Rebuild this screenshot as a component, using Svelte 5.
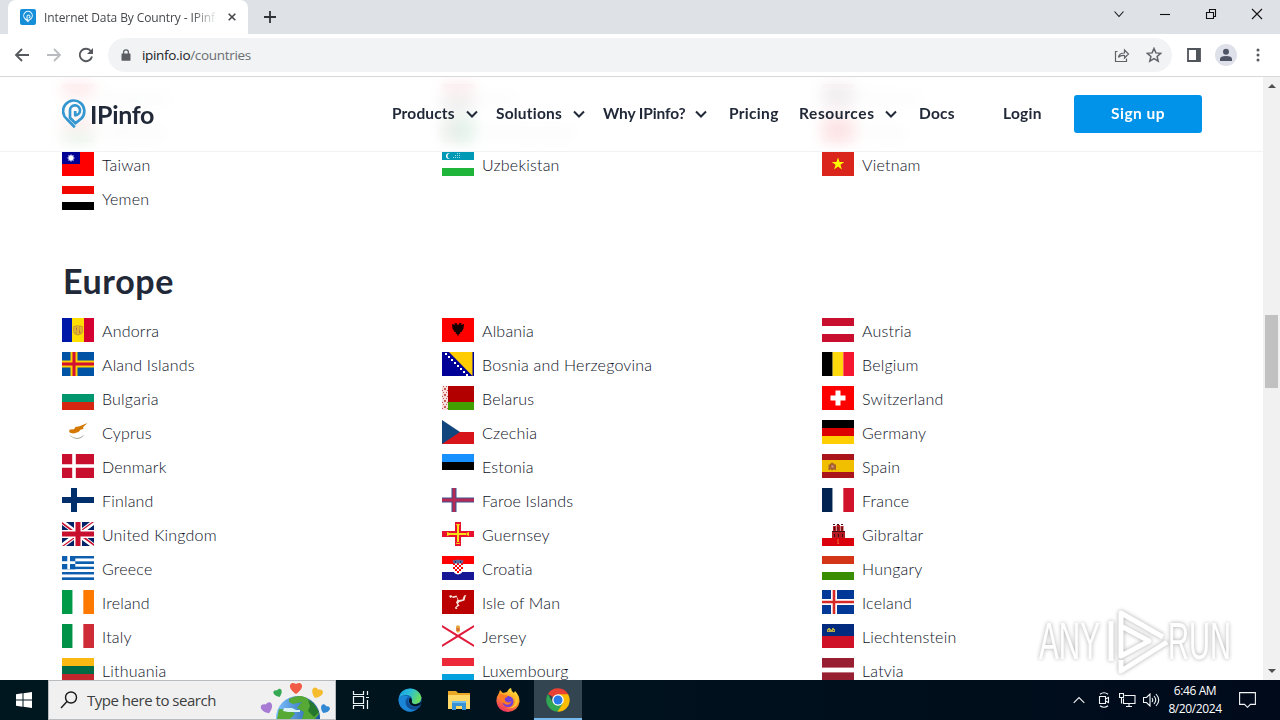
<script lang="ts">
  type Shape = [string, string];
  type Country = { name: string; flag: Shape[] };

  const rect = (x: number, y: number, w: number, h: number) => `M${x} ${y}h${w}v${h}h${-w}z`;

  // equal horizontal and vertical bands
  const rows = (...colors: string[]): Shape[] =>
    colors.map((c, i) => [c, rect(0, (24 / colors.length) * i, 32, 24 / colors.length)]);
  const cols = (...colors: string[]): Shape[] =>
    colors.map((c, i) => [c, rect((32 / colors.length) * i, 0, 32 / colors.length, 24)]);

  const cross = (color: string, cx: number, t: number): Shape => [
    color,
    rect(cx - t / 2, 0, t, 24) + rect(0, 12 - t / 2, 32, t)
  ];

  const dots = (...points: number[][]) => points.map(([x, y, s = 1]) => rect(x, y, s, s)).join('');

  const asia: Country[] = [
    { name: 'Singapore', flag: rows('#ee2536', '#fff') },
    { name: 'Syria', flag: rows('#ce1126', '#fff', '#000') },
    { name: 'Thailand', flag: rows('#a51931', '#f4f5f8', '#2d2a4a', '#2d2a4a', '#f4f5f8', '#a51931') },
    { name: 'Tajikistan', flag: rows('#cc0000', '#fff', '#006600') },
    { name: 'Turkmenistan', flag: [['#00843d', rect(0, 0, 32, 24)], ['#d22630', rect(5, 0, 5, 24)]] },
    { name: 'Turkey', flag: [['#e30a17', rect(0, 0, 32, 24)], ['#fff', 'M14 6a6 6 0 1 0 0 12a5 5 0 1 1 0-12']] },
    {
      name: 'Taiwan',
      flag: [
        ['#fe0000', rect(0, 0, 32, 24)],
        ['#000095', rect(0, 0, 18, 12)],
        ['#8d8dd8', 'M9 2l1.200 1.200 1.700-.2-.2 1.700L13 6l-1.300 1.300.2 1.700-1.700-.2L9 10 7.800 8.800 6.100 9l.2-1.700L5 6l1.300-1.300L6.100 3l1.700.2z'],
        ['#fff', 'M9 3.600a2.400 2.400 0 1 0 0 4.800a2.400 2.400 0 1 0 0-4.800']
      ]
    },
    {
      name: 'Uzbekistan',
      flag: [
        ...rows('#0099b5', '#fff', '#1eb53a'),
        ['#fff', 'M8 1.500a2.800 2.800 0 1 0 0 5a2.500 2.500 0 1 1 0-5'],
        ['#9fdbe6', dots([11, 5], [13, 5], [15, 5], [17, 5], [13, 3], [15, 3], [17, 3], [15, 1], [17, 1])]
      ]
    },
    {
      name: 'Vietnam',
      flag: [
        ['#da251d', rect(0, 0, 32, 24)],
        ['#ff0', 'M16 5.500l1.500 4.500h4.800l-3.900 2.800 1.500 4.600-3.900-2.900-3.900 2.900 1.500-4.600-3.900-2.800h4.800z']
      ]
    },
    { name: 'Yemen', flag: rows('#f10600', '#fff', '#000') }
  ];

  const europe: Country[] = [
    {
      name: 'Andorra',
      flag: [
        ['#0018a8', rect(0, 0, 10, 24)], ['#fedf00', rect(10, 0, 12, 24)], ['#d50032', rect(22, 0, 10, 24)],
        ['#d0a02c', 'M11 8.500q5-2.500 10 0v5q-1 3.500-5 4q-4-.5-5-4z'],
        ['#f2cf2c', rect(12.5, 9, 1, 5) + rect(15.5, 8, 1, 8) + rect(18.5, 9, 1, 5)],
        ['#c8703a', rect(14, 10, 1, 2) + rect(17, 12, 1, 3)]
      ]
    },
    {
      name: 'Albania',
      flag: [
        ['#f00', rect(0, 0, 32, 24)],
        ['#160000', 'M16 7.500l-1.500-2.500-2.500.5 1.200 1.500-3.200-1 .5 4.500 2 3.500 1.500 0-.5 1.500 1.500.500 1 2.500 1-2.500 1.500-.5-.5-1.500 1.500 0 2-3.500 .5-4.500-3.200 1 1.200-1.500-2.500-.5z']
      ]
    },
    { name: 'Austria', flag: rows('#c8102e', '#fff', '#c8102e') },
    { name: 'Aland Islands', flag: [['#0053a5', rect(0, 0, 32, 24)], cross('#ffce00', 12, 7), cross('#d21034', 12, 3)] },
    {
      name: 'Bosnia and Herzegovina',
      flag: [
        ['#000099', rect(0, 0, 32, 24)],
        ['#fc0', 'M7 0h23.500v24z'],
        ['#fff', dots([3, 1, 2], [6, 4, 2], [9, 7, 2], [12, 10, 2], [15, 13, 2], [18, 16, 2], [21, 19, 2], [24, 22, 2])]
      ]
    },
    { name: 'Belgium', flag: cols('#000', '#ffd90c', '#f31830') },
    { name: 'Bulgaria', flag: rows('#fff', '#00966e', '#d62612') },
    {
      name: 'Belarus',
      flag: [
        ['#b20000', rect(0, 0, 32, 16)], ['#429f00', rect(0, 16, 32, 8)], ['#f6dfdc', rect(0, 0, 6, 24)],
        ['#c65b55', dots([1, 0], [4, 0], [2, 2, 2], [0, 4], [5, 4], [1, 6], [4, 6], [2, 8, 2], [0, 10], [5, 10], [1, 12], [4, 12], [2, 14, 2], [0, 16], [5, 16], [1, 18], [4, 18], [2, 20, 2], [0, 22], [5, 22])]
      ]
    },
    { name: 'Switzerland', flag: [['#f00', rect(0, 0, 32, 24)], ['#fff', rect(13.5, 4.5, 5, 15) + rect(8.5, 9.5, 15, 5)]] },
    {
      name: 'Cyprus',
      flag: [
        ['#fff', rect(0, 0, 32, 24)],
        ['#d57800', 'M7 11l1-1.500 4-.3 1.500-2.200 4-.8 8-3.200-4.500 4.200.5 1.500-3 1-2 2.300-5 1.500-3.500-.7z'],
        ['#a3ab9f', 'M7 14.800q3 3.500 8 4.200 6-.7 7-4.700-2 3-7 3.700-4-.2-8-3.200']
      ]
    },
    { name: 'Czechia', flag: [...rows('#fff', '#d7141a'), ['#11457e', 'M0 0l18 12L0 24z']] },
    { name: 'Germany', flag: rows('#000', '#d00', '#ffce00') },
    { name: 'Denmark', flag: [['#c8102e', rect(0, 0, 32, 24)], cross('#fff', 12, 3.6)] },
    { name: 'Estonia', flag: rows('#1791ff', '#000', '#fff') },
    {
      name: 'Spain',
      flag: [
        ['#aa151b', rect(0, 0, 32, 24)], ['#f1bf00', rect(0, 6, 32, 12)],
        ['#a7612d', 'M6.500 10.500h1.500v5.500H6.500zm6 0H14v5.500h-1.500zM8 10l2-1.500 2.500 1.500v5l-2.500 1.500L8 15z'],
        ['#d4a190', rect(9.5, 11.5, 2, 2)]
      ]
    },
    { name: 'Finland', flag: [['#fff', rect(0, 0, 32, 24)], cross('#002f6c', 12, 6)] },
    { name: 'Faroe Islands', flag: [['#fff', rect(0, 0, 32, 24)], cross('#3a5590', 12, 5), cross('#b82a54', 12, 2.8)] },
    { name: 'France', flag: cols('#00234f', '#fff', '#d0122b') },
    {
      name: 'United Kingdom',
      flag: [
        ['#012169', rect(0, 0, 32, 24)],
        ['#fff', 'M0 0h4l12 9L28 0h4v3l-12 9 12 9v3h-4l-12-9-12 9H0v-3l12-9L0 3z'],
        ['#c8102e', 'M0 0l11 8h-3L0 2zm32 0l-11 8h-2l11-8zM0 24l11-8h2L2 24zm32 0l-11-8h3l8 6z'],
        ['#fff', rect(12, 0, 8, 24) + rect(0, 8, 32, 8)],
        ['#c8102e', rect(13.5, 0, 5, 24) + rect(0, 9.5, 32, 5)]
      ]
    },
    {
      name: 'Guernsey',
      flag: [
        ['#fff', rect(0, 0, 32, 24)], ['#e8112d', rect(13, 0, 6, 24) + rect(0, 9, 32, 6)],
        ['#f9dd16', rect(15, 3, 2, 18) + rect(7, 11, 18, 2) + 'M5 10l2.500 1v2L5 14zm22 0l-2.500 1v2l2.500 1zM14 2h4l-1 2h-2zm0 20h4l-1-2h-2z']
      ]
    },
    {
      name: 'Gibraltar',
      flag: [
        ['#fff', rect(0, 0, 32, 16)], ['#da000c', rect(0, 16, 32, 8)],
        ['#b51a23', rect(11, 4, 3, 11) + rect(14.5, 3, 3.5, 12) + rect(18.5, 4, 3, 11) + rect(10, 9, 13, 7)],
        ['#401018', rect(11, 2, 2, 1) + rect(15, 2, 2, 1) + rect(19, 2, 2, 1) + rect(12, 5, 1, 3) + rect(15.5, 5, 1, 3) + rect(19.5, 5, 1, 3) + rect(10, 9, 13, 1) + rect(12, 12, 1, 3) + rect(16, 12, 1, 3) + rect(20, 12, 1, 3)],
        ['#e8702a', rect(15.5, 17, 1, 5) + rect(16, 21, 1, 1)]
      ]
    },
    {
      name: 'Greece',
      flag: [
        ...rows('#0d5eaf', '#fff', '#0d5eaf', '#fff', '#0d5eaf', '#fff', '#0d5eaf', '#fff', '#0d5eaf'),
        ['#0d5eaf', rect(0, 0, 13.3, 13.3)],
        ['#fff', rect(5.3, 0, 2.7, 13.3) + rect(0, 5.3, 13.3, 2.7)]
      ]
    },
    {
      name: 'Croatia',
      flag: [
        ...rows('#f00', '#fff', '#171796'),
        ['#fff', 'M11 7h10v7q-1 4-5 4.500-4-.5-5-4.500z'],
        ['#f00', dots([11, 7, 2], [15, 7, 2], [19, 7, 2], [13, 9, 2], [17, 9, 2], [11, 11, 2], [15, 11, 2], [19, 11, 2], [13, 13, 2], [17, 13, 2], [15, 15, 2])],
        ['#5a6ba0', 'M10.500 4l2 .5L14 3.500l2 .5 2-.5 1.500 1 2-.5-1 3.500h-9z'],
        ['#26315e', rect(13, 5, 1, 2) + rect(18, 5, 1, 2)]
      ]
    },
    { name: 'Hungary', flag: rows('#d43516', '#fff', '#388d00') },
    { name: 'Ireland', flag: cols('#009a49', '#fff', '#ff7900') },
    {
      name: 'Isle of Man',
      flag: [
        ['#ba0000', rect(0, 0, 32, 24)],
        ['#f6e5dc', 'M7 6l2-1 1.500 1.500 4-1 2 4.500 4-.5 1.500-4 2.500-.5-1 1.500-1 4-5 1.500-1.500 1.500 1.500 2-3 2 1 1.500-2 0-.5-1.500 2.500-2.500-1.500-2.500 1.500-3-1-2.500-3 1-2-1-.5 1-1-.5z']
      ]
    },
    { name: 'Iceland', flag: [['#003897', rect(0, 0, 32, 24)], cross('#fff', 12, 6), cross('#d72828', 12, 2.6)] },
    { name: 'Italy', flag: cols('#009246', '#fff', '#ce2b37') },
    {
      name: 'Jersey',
      flag: [
        ['#fff', rect(0, 0, 32, 24)],
        ['#e01b3c', 'M0 1l16 9.700L32 1v2.300L18 12l14 8.700V23L16 13.300 0 23v-2.300L14 12 0 3.300z'],
        ['#e8a73a', 'M14 3l.5-1.500h3L18 3v4l-2 2-2-2z'],
        ['#d9703a', rect(14.5, 4, 3, 3)]
      ]
    },
    {
      name: 'Liechtenstein',
      flag: [...rows('#002b7f', '#ce1126'), ['#b9a847', rect(5, 5, 8, 3) + rect(6, 4, 2, 1) + rect(10, 4, 2, 1)], ['#444c35', dots([6, 6], [9, 5], [11, 6])]]
    },
    { name: 'Lithuania', flag: rows('#fdb913', '#006a44', '#c1272d') },
    { name: 'Luxembourg', flag: rows('#ed2939', '#fff', '#00a1de') },
    { name: 'Latvia', flag: [['#981e32', rect(0, 0, 32, 24)], ['#fff', rect(0, 9.6, 32, 4.8)]] }
  ];

  const nav = [
    { label: 'Products', menu: true, spacing: 0.15 },
    { label: 'Solutions', menu: true, spacing: 0.2 },
    { label: 'Why IPinfo?', menu: true, spacing: -0.12, wide: true },
    { label: 'Pricing', spacing: 0.3 },
    { label: 'Resources', menu: true, spacing: 0.6, wide: true },
    { label: 'Docs', spacing: 0.2 },
    { label: 'Login', spacing: 0.3 }
  ];
</script>

{#snippet grid(countries: Country[])}
  <ul class="countries">
    {#each countries as country}
      <li>
        <svg class="flag" viewBox="0 0 32 24">
          {#each country.flag as [fill, d]}
            <path {fill} {d} />
          {/each}
        </svg>
        <span>{country.name}</span>
      </li>
    {/each}
  </ul>
{/snippet}

<div class="desktop">
  <div class="tabstrip">
    <div class="tab">
      <svg class="favicon" viewBox="0 0 16 16">
        <rect width="16" height="16" rx="2" fill="#168fd8" />
        <path d="M8.500 13L4.800 9.500a4.300 4.300 0 1 1 6.400 0L8.500 11.600 7 10V7.500a1.500 1.500 0 1 1 1.500 1.500" fill="none" stroke="#e3f5ff" stroke-width="1.1" />
      </svg>
      <span class="tab-title">Internet Data By Country - IPinfo</span>
      <svg class="tab-close" viewBox="0 0 8 8"><path d="M.7.7l6.600 6.600M7.300.7L.7 7.300" stroke="#45494d" stroke-width="1.6" /></svg>
    </div>
    <svg class="new-tab" viewBox="0 0 12 12"><path d="M6 0v12M0 6h12" stroke="#303238" stroke-width="1.8" /></svg>
    <div class="window-buttons">
      <svg viewBox="0 0 12 12"><path d="M1.500 3.500L6 8.500l4.500-5" /></svg>
      <svg viewBox="0 0 12 12"><path d="M1 6.500h10" /></svg>
      <svg viewBox="0 0 12 12"><path d="M1.500 4.500h7v6h-7zM4.500 4.500v-3h6v7h-2" /></svg>
      <svg viewBox="0 0 12 12"><path d="M1 1l10 10M11 1L1 11" /></svg>
    </div>
  </div>

  <div class="toolbar">
    <svg class="tool" viewBox="0 0 16 16"><path d="M15 8H2M8 2L2 8l6 6" fill="none" stroke="#55595e" stroke-width="1.8" /></svg>
    <svg class="tool" viewBox="0 0 16 16"><path d="M1 8h13M8 2l6 6-6 6" fill="none" stroke="#b9bbbe" stroke-width="1.8" /></svg>
    <svg class="tool" viewBox="0 0 16 16">
      <path d="M13 4.300A6.200 6.200 0 1 0 14 9.500" fill="none" stroke="#55595e" stroke-width="1.9" />
      <path d="M15 1v6H9z" fill="#55595e" />
    </svg>
    <div class="omnibox">
      <svg class="lock" viewBox="0 0 10 12">
        <path d="M1 4.500h8q.5 0 .5.600v6q0 .6-.5.600H1q-.5 0-.5-.6v-6q0-.6.5-.6" fill="#5b5f64" />
        <path d="M2.600 5V3.300a2.400 2.400 0 0 1 4.800 0V5" fill="none" stroke="#5b5f64" stroke-width="1.3" />
      </svg>
      <span class="url"><b>ipinfo.io</b>/countries</span>
      <svg class="share" viewBox="0 0 16 16">
        <path d="M3.500 4.500h-2v10h11v-3M4.500 10.500q.5-4.500 6-4.500V3l4 4-4 4V8.500q-4-.5-6 2" fill="none" stroke="#5f6368" stroke-width="1.2" />
      </svg>
      <svg class="star" viewBox="0 0 16 16">
        <path d="M8 1.500l1.900 4.400 4.800.4-3.600 3.100 1.100 4.700L8 11.600l-4.200 2.500 1.100-4.700-3.600-3.100 4.800-.4z" fill="none" stroke="#5f6368" stroke-width="1.5" />
      </svg>
    </div>
    <svg class="panel" viewBox="0 0 14 14"><path d="M1 1h12v12H1z" fill="#fff" stroke="#50545b" stroke-width="1.8" /><path d="M9 1h4v12H9z" fill="#50545b" /></svg>
    <svg class="avatar" viewBox="0 0 22 22">
      <circle cx="11" cy="11" r="11" fill="#dfe1ea" />
      <circle cx="11" cy="7.7" r="3" fill="#505566" />
      <path d="M5 17v-2q0-3 6-3t6 3v2z" fill="#505566" />
    </svg>
    <svg class="kebab" viewBox="0 0 4 14"><circle cx="2" cy="2" r="1.5" /><circle cx="2" cy="7" r="1.5" /><circle cx="2" cy="12" r="1.5" /></svg>
  </div>

  <div class="viewport">
    <div class="page">
      <main>
        {@render grid(asia)}
        <h2>Europe</h2>
        {@render grid(europe)}
      </main>
      <header>
        <a class="logo" href="/" aria-label="IPinfo">
          <svg viewBox="0 0 24 31">
            <path d="M12.800 29.200L5 21.300A10.600 10.600 0 1 1 19.300 20.500L13.500 25.300 8 19.800V12.500A5 5 0 1 1 13.200 17.300V13" fill="none" stroke="#3597d0" stroke-width="2.7" stroke-linejoin="round" />
          </svg>
          <span>IPinfo</span>
        </a>
        <nav>
          {#each nav as item}
            <a href="/" class:wide={item.wide} style:letter-spacing="{item.spacing}px">
              <span>{item.label}</span>
              {#if item.menu}
                <svg viewBox="0 0 12 8"><path d="M1 1.500l5 5 5-5" fill="none" stroke="#212938" stroke-width="2" /></svg>
              {/if}
            </a>
          {/each}
          <a class="signup" href="/"><span>Sign up</span></a>
        </nav>
      </header>
    </div>
    <div class="scrollbar">
      <svg viewBox="0 0 8 4"><path d="M4 0l4 4H0z" /></svg>
      <div class="thumb"></div>
      <svg viewBox="0 0 8 4"><path d="M0 0h8L4 4z" /></svg>
    </div>

    <svg class="watermark" viewBox="0 0 210 74">
      <g fill="#fff" font-size="52">
        <text x="8" y="55" textLength="61" lengthAdjust="spacingAndGlyphs">ANY</text>
        <text x="137" y="55" textLength="63" lengthAdjust="spacingAndGlyphs">RUN</text>
      </g>
      <path d="M80 57V17M90 46V9l42 24M90 56V67l46-29M90 22v30l28-15z" fill="none" stroke="#fff" stroke-width="5" stroke-linejoin="round" />
    </svg>
  </div>

  <div class="taskbar">
    <div class="start">
      <svg viewBox="0 0 16 16"><path d="M0 2.200l6.500-.9v6.200H0zM7.500 1.200L16 0v7.500H7.500zM0 8.500h6.500v6.200L0 13.800zM7.500 8.500H16V16l-8.500-1.200z" fill="#fff" /></svg>
    </div>
    <div class="search">
      <svg class="glass" viewBox="0 0 18 18"><circle cx="11" cy="6.5" r="5.5" /><path d="M7 10.500L1 17" /></svg>
      <span>Type here to search</span>
      <svg class="earth" viewBox="0 0 72 38">
        <defs>
          <linearGradient id="sea"><stop offset="0" stop-color="#7ec0ff" /><stop offset="1" stop-color="#17569e" /></linearGradient>
          <path id="heart" d="M0 6C-10 0-6-8 0-4 6-8 10 0 0 6" />
        </defs>
        <circle cx="38" cy="37" r="22" fill="url(#sea)" />
        <path d="M29 18q13-7 21 2 7 5 9 13l-4 5H42l2-7-7-4 5-6-9 2-4-2zM19 28l12 1 4 4-5 5H17z" fill="#55a934" />
        <path d="M48 19l5 3 6 9-5 5-6-6 2-5z" fill="#25772d" />
        <path d="M24 27h8l4 2h4v2H28l-5-1z" fill="#d9f3f4" />
        <use href="#heart" transform="translate(36 7)" fill="#f15c46" />
        <use href="#heart" transform="translate(18 12) rotate(-22) scale(.7)" fill="#35a853" />
        <use href="#heart" transform="translate(57 12) rotate(22) scale(.9)" fill="#f5bd2d" />
        <use href="#heart" transform="translate(7 27) rotate(-20) scale(.95)" fill="#a77bd4" />
        <use href="#heart" transform="translate(65 28) rotate(24) scale(.75)" fill="#3289d3" />
      </svg>
    </div>
    <div class="app">
      <svg class="taskview" viewBox="0 0 18 18"><path d="M1.500 0v3.500h10V0M1.500 5.500h10v7h-10zM1.500 18v-3.500h10V18M15.500 0v4M15.500 9v9M14 6.500h3" fill="none" stroke="#eef3f5" stroke-width="1.2" /></svg>
    </div>
    <div class="app">
      <svg viewBox="0 0 24 24">
        <defs>
          <linearGradient id="edge" x2="1" y2=".4"><stop offset="0" stop-color="#1799dc" /><stop offset=".5" stop-color="#29bdd7" /><stop offset="1" stop-color="#69dd62" /></linearGradient>
        </defs>
        <circle cx="12" cy="12" r="11.5" fill="#1267b4" />
        <path d="M.6 11Q2 .5 12.500.5q8.500.5 11 9-.5 6-6.500 6.500-4 0-3-3 1-5-4.500-6Q3 6.500.6 11" fill="url(#edge)" />
        <path d="M.6 11q4-5 10-2.500-5 3-2.500 8.500 3 6 10.500 4.500-6 4-12 .5Q.5 18.500.6 11" fill="#1b86d6" />
        <path d="M11 10q-2.500 4 1.500 7.500 4 2 9 0l1-1q1 1-1 3-4 3-9 1.500-6-3-4-8.500.8-2 2.500-2.500" fill="#124d91" />
        <path d="M12 9.500q2.500 1.500 2 4-.5 3 4 2.700 4-.5 5.300-3-.3 3-2.300 4.300-5 1.500-8-.5-3.500-3.500-1-7.500" fill="#00131e" />
      </svg>
    </div>
    <div class="app">
      <svg class="folder" viewBox="0 0 22 20">
        <path d="M0 1h8l2 2h12v16H0z" fill="#e9a927" />
        <path d="M0 5h22v14H0z" fill="#ffd968" />
        <path d="M4 12h14v8h-4v-4H8v4H4z" fill="#3992d4" />
        <path d="M4 11h14v2H4z" fill="#72bceb" />
      </svg>
    </div>
    <div class="app">
      <svg viewBox="0 0 24 24">
        <defs>
          <linearGradient id="fox" x1=".8" y1="0" x2=".3" y2="1"><stop offset="0" stop-color="#fff33f" /><stop offset=".45" stop-color="#ff9a25" /><stop offset="1" stop-color="#f02c63" /></linearGradient>
        </defs>
        <path d="M3 5l1-3 3 3 4-1q1-3 4-4 0 3 3 5l1-2q5 5 4.500 11Q22 23 12 24 2 23.500.5 14 0 9 3 5" fill="url(#fox)" />
        <circle cx="12" cy="13.5" r="5.5" fill="#7540d7" />
        <path d="M3 6q3 0 5 1l4 .5q-.5 2-3 2.500-1 4 3.500 4.500 2 0 3-2-1 5-5.500 4Q4 15 3 6" fill="#ff7b22" />
        <path d="M15 5q6 3 4 10-2 5-8 5 10 2 11-8-1-6-7-7" fill="#ffc52b" />
      </svg>
    </div>
    <div class="app active">
      <svg viewBox="0 0 24 24">
        <path d="M12 12L1.900 6A11.700 11.700 0 0 1 22.200 6.300z" fill="#e94235" />
        <path d="M12 12h11.700A11.700 11.700 0 0 0 22.100 6.200H12z" fill="#fbbc04" />
        <path d="M12 12h11.700A11.700 11.700 0 0 1 11.500 23.700z" fill="#fbbc04" />
        <path d="M12 12l5 3-5.500 8.700A11.700 11.700 0 0 1 1.900 6L7 15z" fill="#32a753" />
        <circle cx="12" cy="12" r="5.8" fill="#fff" />
        <circle cx="12" cy="12" r="4.5" fill="#287ae8" />
      </svg>
    </div>
    <div class="tray">
      <svg class="up" viewBox="0 0 12 8"><path d="M.7 6.800L6 1.500l5.300 5.300" /></svg>
      <svg class="meet" viewBox="0 0 12 16"><path d="M1.500 4.500h6v7h-6zM7.500 7l3-1.500v5l-3-1.500M2 2.200q4-3 8 0M2 13.800q4 3 8 0" /></svg>
      <svg class="network" viewBox="0 0 17 14"><path d="M5.500 2.500h10.500v8H4.500v-5M7 13.500h6M10 10.500v3M.5.500h4v4h-4zM2.500 4.500v6" /></svg>
      <svg class="sound" viewBox="0 0 17 14"><path d="M.5 4.500h3L7 1v12L3.500 9.500h-3zM9 5q1.500 2 0 4M11 3q3.500 4 0 8M13 1q5.500 6 0 12" /></svg>
      <div class="clock"><span>6:46 AM</span><span>8/20/2024</span></div>
      <svg class="notes" viewBox="0 0 17 16"><path d="M.6.6h15.800v11.800h-5L8.500 15.300l-3-2.900H.6z" /></svg>
    </div>
  </div>
</div>

<style>
  .desktop {
    width: 1280px;
    height: 720px;
    overflow: hidden;
    display: flex;
    flex-direction: column;
    background: #fff;
    font-family: 'Open Sans', 'Noto Sans', sans-serif;
  }

  svg {
    display: block;
    flex: none;
  }

  a {
    color: inherit;
    text-decoration: none;
  }

  /* browser chrome */
  .tabstrip {
    height: 34px;
    flex: none;
    display: flex;
    align-items: center;
    background: #dee1e6;
    padding-left: 8px;
  }

  .tab {
    width: 240px;
    height: 34px;
    box-sizing: border-box;
    display: flex;
    align-items: center;
    padding: 0 12px;
    background: #fff;
    border-radius: 8px 8px 0 0;
  }

  .favicon {
    width: 16px;
    height: 16px;
  }

  .tab-title {
    width: 172px;
    margin-left: 8px;
    overflow: hidden;
    white-space: nowrap;
    font-size: 12px;
    letter-spacing: -0.1px;
    color: #45484c;
    mask-image: linear-gradient(to right, #000 148px, transparent 174px);
  }

  .tab-close {
    width: 8px;
    height: 8px;
    margin-left: 12px;
  }

  .new-tab {
    width: 12px;
    height: 12px;
    margin-left: 16px;
  }

  .window-buttons {
    margin-left: auto;
    display: flex;
    gap: 34px;
    padding: 0 17px 6px 0;
  }

  .window-buttons svg {
    width: 12px;
    height: 12px;
    fill: none;
    stroke: #111;
    stroke-width: 1.1;
  }

  .toolbar {
    height: 42px;
    flex: none;
    display: flex;
    align-items: center;
    padding-left: 14px;
    border-bottom: 1px solid #d6d8da;
  }

  .tool {
    width: 16px;
    height: 16px;
    margin-right: 16px;
  }

  .omnibox {
    width: 1064px;
    height: 34px;
    box-sizing: border-box;
    margin-left: -2px;
    display: flex;
    align-items: center;
    padding: 0 10px 0 13px;
    border-radius: 17px;
    background: #f1f3f4;
  }

  .lock {
    width: 10px;
    height: 12px;
  }

  .url {
    margin-left: 11px;
    font-size: 13.5px;
    letter-spacing: -0.32px;
    color: #6a6e73;
  }

  .url b {
    font-weight: 400;
    color: #202124;
  }

  .share {
    width: 16px;
    height: 16px;
    margin-left: auto;
  }

  .star {
    width: 16px;
    height: 16px;
    margin-left: 16px;
  }

  .panel {
    width: 14px;
    height: 14px;
    margin-left: 15px;
  }

  .avatar {
    width: 22px;
    height: 22px;
    margin-left: 14px;
  }

  .kebab {
    width: 4px;
    height: 14px;
    margin-left: 19px;
    fill: #55595e;
  }

  /* web page */
  .viewport {
    height: 603px;
    flex: none;
    display: flex;
    position: relative;
  }

  .page {
    width: 1263px;
    height: 603px;
    overflow: hidden;
    position: relative;
    font-family: Lato, 'Open Sans', sans-serif;
    color: #212938;
  }

  main {
    padding: 7px 61px 0 62px;
  }

  .countries {
    display: grid;
    grid-template-columns: repeat(3, 380px);
    grid-auto-rows: 34px;
    margin: 0;
    padding: 0;
    list-style: none;
  }

  .countries li {
    height: 24px;
    display: flex;
    gap: 8px;
  }

  .countries span {
    padding-top: 1px;
    font-size: 16px;
    line-height: 24px;
    font-weight: 300;
    letter-spacing: 0.2px;
    color: #0c1226;
    white-space: nowrap;
  }

  .flag {
    width: 32px;
    height: 24px;
  }

  h2 {
    margin: 0;
    padding: 37px 0 1px 1px;
    height: 60px;
    font-size: 34px;
    line-height: 48px;
    font-weight: 700;
    letter-spacing: 0.6px;
  }

  header {
    position: absolute;
    top: 0;
    left: 0;
    width: 1263px;
    height: 75px;
    box-sizing: border-box;
    padding: 0 61px 0 62px;
    display: flex;
    align-items: center;
    justify-content: space-between;
    background: rgba(255, 255, 255, 0.88);
    backdrop-filter: blur(8px);
    border-bottom: 1px solid #f1f2f4;
  }

  .logo {
    display: flex;
    align-items: center;
    gap: 4px;
    padding-bottom: 1px;
    font-size: 25px;
    font-weight: 700;
    letter-spacing: -0.35px;
  }

  .logo svg {
    width: 24px;
    height: 31px;
  }

  nav {
    display: grid;
    grid-template-columns: 104px 107px 126px 70px 120px 84px 71px 128px;
    align-items: center;
    font-size: 15.5px;
    font-weight: 700;
    white-space: nowrap;
  }

  nav a {
    display: flex;
    align-items: center;
    justify-content: space-between;
    padding-right: 18px;
  }

  nav .wide {
    padding-right: 22px;
  }

  nav span {
    padding-bottom: 2px;
  }

  nav svg {
    width: 12px;
    height: 8px;
  }

  nav .signup {
    height: 38px;
    padding: 0;
    justify-content: center;
    border-radius: 3px;
    background: #0093e9;
    color: #fff;
    letter-spacing: 0.45px;
  }

  .scrollbar {
    width: 17px;
    box-sizing: border-box;
    display: flex;
    flex-direction: column;
    align-items: center;
    padding: 7px 1px;
    background: #f1f1f1;
  }

  .scrollbar svg {
    width: 8px;
    height: 4px;
    fill: #505050;
  }

  .thumb {
    width: 13px;
    height: 73px;
    margin-top: 227px;
    margin-bottom: auto;
    background: #c1c1c1;
  }

  .watermark {
    position: absolute;
    left: 1031px;
    top: 527px;
    width: 210px;
    height: 74px;
    font-family: 'Liberation Sans', Arial, sans-serif;
    filter: drop-shadow(0 0 2px rgba(0, 0, 0, 0.45));
    opacity: 0.75;
  }

  /* taskbar */
  .taskbar {
    height: 40px;
    flex: none;
    display: flex;
    background: linear-gradient(to right, #001720, #00121d 50%, #000a1b);
  }

  .start {
    width: 48px;
    display: grid;
    place-items: center;
  }

  .start svg {
    width: 16px;
    height: 16px;
  }

  .search {
    width: 288px;
    box-sizing: border-box;
    display: flex;
    align-items: center;
    padding-left: 11px;
    background: #f0f0f0;
    border: 1px solid #b8bcbe;
    font-size: 15px;
    color: #3d3f41;
    white-space: nowrap;
  }

  .glass {
    width: 18px;
    height: 18px;
    margin-right: 9px;
    fill: none;
    stroke: #181818;
    stroke-width: 1.4;
  }

  .search span {
    width: 129px;
    letter-spacing: -0.48px;
  }

  .earth {
    width: 72px;
    height: 38px;
    margin-left: 44px;
  }

  .app {
    width: 49px;
    height: 40px;
    box-sizing: border-box;
    display: grid;
    place-items: center;
  }

  .app svg {
    width: 24px;
    height: 24px;
  }

  .app .taskview {
    width: 18px;
    height: 18px;
  }

  .app .folder {
    width: 22px;
    height: 20px;
  }

  .active {
    margin-left: 2px;
    width: 48px;
    background: #324550;
    box-shadow: inset 0 -2px #76b9ed;
  }

  .tray {
    margin-left: auto;
    display: flex;
    align-items: center;
    padding-right: 24px;
  }

  .tray svg {
    fill: none;
    stroke: #f2f4f5;
    stroke-width: 1.1;
  }

  .up {
    width: 12px;
    height: 8px;
  }

  .meet {
    width: 12px;
    height: 16px;
    margin-left: 13px;
  }

  .network {
    width: 17px;
    height: 14px;
    margin-left: 9px;
  }

  .sound {
    width: 17px;
    height: 14px;
    margin-left: 7px;
  }

  .clock {
    width: 56px;
    margin-left: 7px;
    display: flex;
    flex-direction: column;
    align-items: center;
    color: #fff;
    font-size: 12px;
    line-height: 18px;
    letter-spacing: -0.4px;
    white-space: nowrap;
  }

  .notes {
    width: 17px;
    height: 16px;
    margin-left: 16px;
  }
</style>
